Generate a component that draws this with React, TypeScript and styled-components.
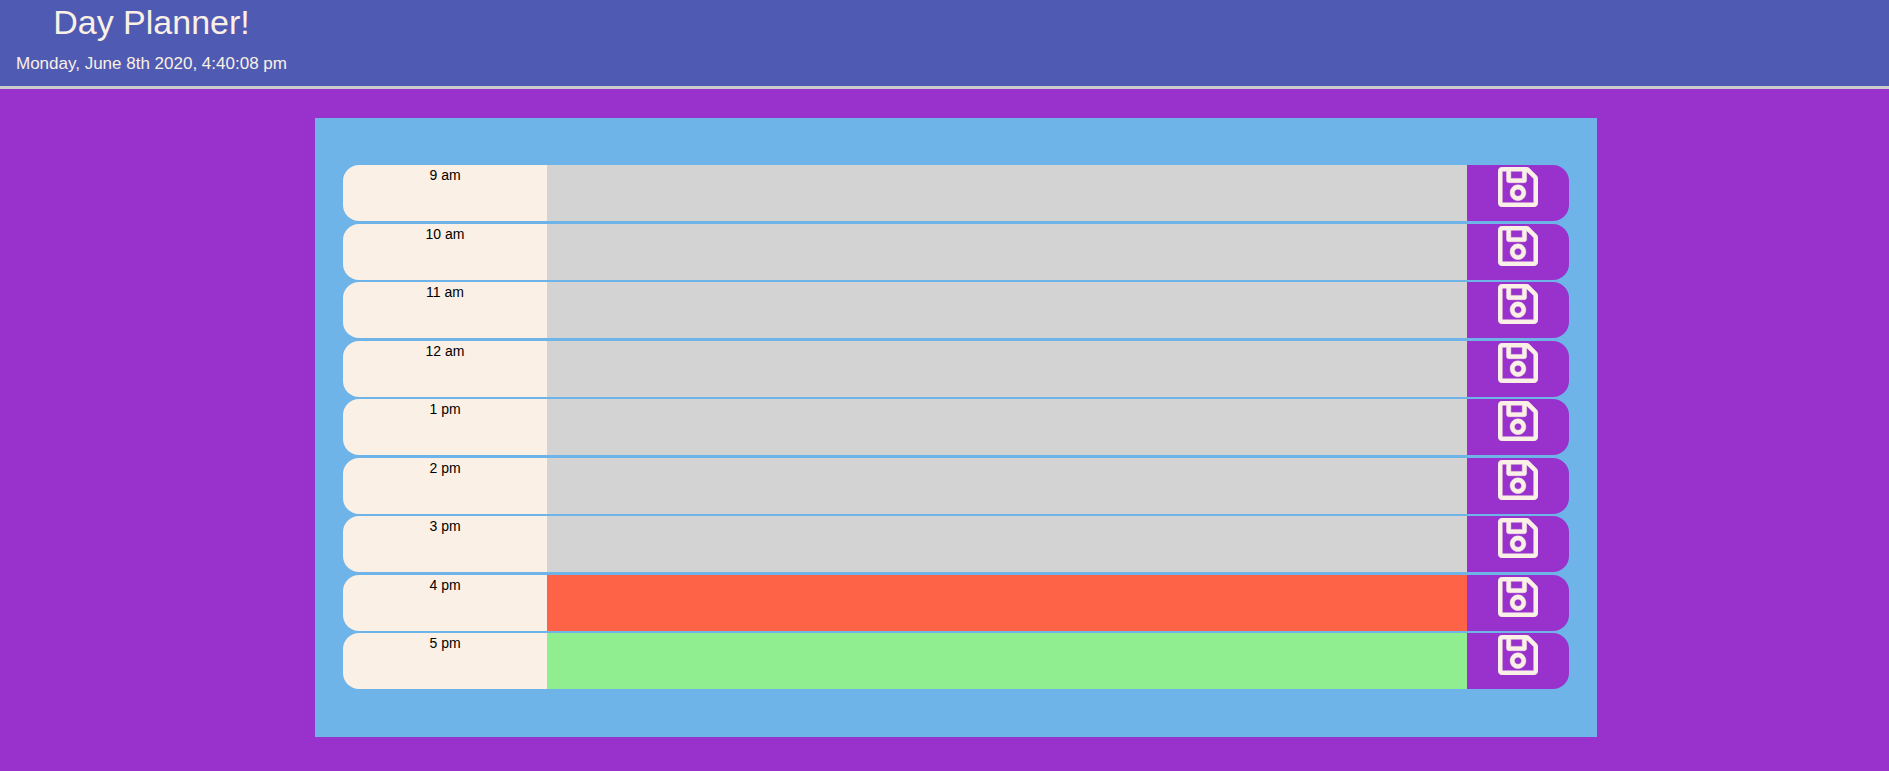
import React from "react";
import styled, { createGlobalStyle } from "styled-components";
import { FaRegSave } from "react-icons/fa";

type Phase = "past" | "present" | "future";

const phaseColors: Record<Phase, string> = {
  past: "#d3d3d3",
  present: "#ff6347",
  future: "#90ee90",
};

const hours: { label: string; phase: Phase }[] = [
  { label: "9 am", phase: "past" },
  { label: "10 am", phase: "past" },
  { label: "11 am", phase: "past" },
  { label: "12 am", phase: "past" },
  { label: "1 pm", phase: "past" },
  { label: "2 pm", phase: "past" },
  { label: "3 pm", phase: "past" },
  { label: "4 pm", phase: "present" },
  { label: "5 pm", phase: "future" },
];

const GlobalStyle = createGlobalStyle`
  *, *::before, *::after { box-sizing: border-box; }
  body {
    margin: 0;
    background: #9932cc;
    font-family: "Liberation Sans", Arial, sans-serif;
  }
`;

const Header = styled.header`
  display: flex;
  padding: 2px 16px 11px;
  background: #4f5bb3;
  border-bottom: 3px solid #cccccc;
  color: #faf0e6;
`;

const Heading = styled.div`
  text-align: center;
`;

const Title = styled.h1`
  margin: 0;
  font-size: 34px;
  line-height: 41px;
  font-weight: 400;
`;

const CurrentTime = styled.p`
  margin: 10px 0 0;
  font-size: 17px;
  line-height: 22px;
`;

const Schedule = styled.main`
  width: calc(100% * 2 / 3 + 23px);
  margin: 29px 0 34px calc(100% / 6);
  padding: 47px 28px 48px;
  background: #6eb4e8;
`;

const HourRow = styled.form`
  display: grid;
  grid-template-columns: 2fr 9fr 1fr;
  min-height: 56px;

  &:nth-child(odd):not(:last-child) { margin-bottom: 3px; }
  &:nth-child(even) { margin-bottom: 2px; }
`;

const HourLabel = styled.label`
  border-radius: 16px 0 0 16px;
  background: #faf0e6;
  color: #000000;
  font-size: 14px;
  line-height: 20px;
  text-align: center;
`;

const Entry = styled.textarea<{ $phase: Phase }>`
  display: block;
  width: 100%;
  height: 100%;
  min-width: 0;
  padding: 2px 8px;
  border: 0;
  outline: 0;
  resize: none;
  background: ${({ $phase }) => phaseColors[$phase]};
  color: #000000;
  font: inherit;
  font-size: 14px;
`;

const SaveButton = styled.button`
  display: flex;
  justify-content: center;
  align-items: flex-start;
  min-width: 0;
  padding: 2px 0 0;
  border: 0;
  border-radius: 0 16px 16px 0;
  background: #9932cc;
  color: #faf0e6;
  cursor: pointer;
`;

const SaveIcon = styled(FaRegSave)`
  width: 40px;
  height: 40px;
  stroke-width: 5;
`;

export default function App() {
  return (
    <>
      <GlobalStyle />
      <Header>
        <Heading>
          <Title>Day Planner!</Title>
          <CurrentTime>Monday, June 8th 2020, 4:40:08 pm</CurrentTime>
        </Heading>
      </Header>
      <Schedule>
        {hours.map(({ label, phase }, index) => (
          <HourRow key={label} onSubmit={(event) => event.preventDefault()}>
            <HourLabel htmlFor={`hour-${index}`}>{label}</HourLabel>
            <Entry id={`hour-${index}`} rows={1} $phase={phase} />
            <SaveButton type="submit" aria-label={`Save ${label}`}>
              <SaveIcon viewBox="0 32 448 448" aria-hidden="true" />
            </SaveButton>
          </HourRow>
        ))}
      </Schedule>
    </>
  );
}
